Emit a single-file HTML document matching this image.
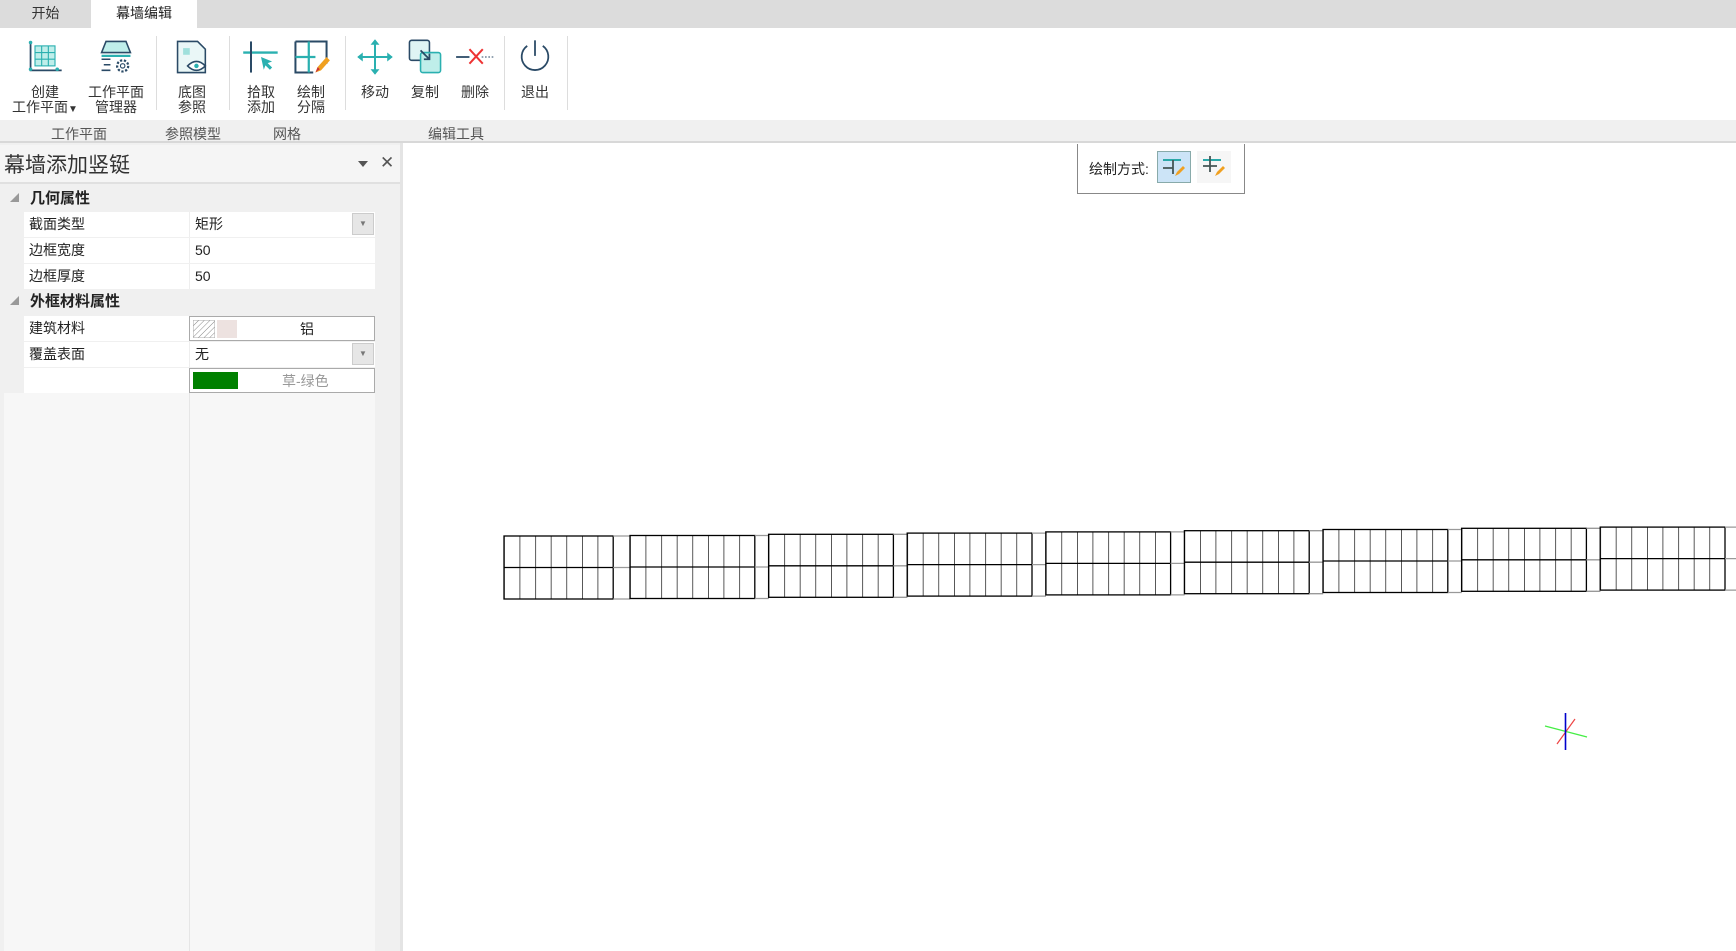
<!DOCTYPE html>
<html><head><meta charset="utf-8"><style>
*{margin:0;padding:0;box-sizing:border-box}
body{width:1736px;height:951px;overflow:hidden;background:#fff;font-family:"Liberation Sans","Noto Sans CJK SC",sans-serif;color:#222;position:relative}
.abs{position:absolute}
.tabbar{left:0;top:0;width:1736px;height:28px;background:#dcdcdc}
.tab{top:0;height:28px;line-height:27px;font-size:14px;text-align:center}
.ribbon{left:0;top:28px;width:1736px;height:92px;background:#fff}
.glabels{left:0;top:120px;width:1736px;height:23px;background:#f0f0f0;border-bottom:2px solid #d8d8d8}
.gl{top:124px;font-size:14px;color:#555;transform:translateX(-50%)}
.btn{top:37px;width:70px;margin-left:-35px;text-align:center;font-size:14px;line-height:15px;color:#333;white-space:nowrap}
.btn svg{display:block;margin:0 auto 8px}
.sep{top:36px;width:1px;height:74px;background:#ddd}
.panel{left:0;top:143px;width:400px;height:808px;background:#f0f0f0}
.split{left:400px;top:143px;width:3px;height:808px;background:#e4e4e4}
.row{left:24px;width:351px;height:25px;background:#fff;font-size:14px;line-height:24px}
.row .n{position:absolute;left:5px;top:0}
.row .v{position:absolute;left:165px;top:0;width:186px;height:25px;border-left:1px solid #eee;padding-left:5px}
.grp{left:0;width:375px;height:26px;font-size:15px;font-weight:bold;line-height:25px}
.dd{position:absolute;right:1px;top:1px;width:22px;height:22px;background:#e6e6e6;border:1px solid #ccc;font-size:8px;text-align:center;line-height:20px;color:#777}
</style></head><body>
<div class="abs tabbar"></div>
<div class="abs tab" style="left:0;width:91px;color:#333">开始</div>
<div class="abs tab" style="left:91px;width:106px;background:#fff">幕墙编辑</div>
<div class="abs ribbon"></div>

<div class="abs btn" style="left:45px"><svg width="40" height="40" viewBox="0 0 36 36"><rect x="9" y="8" width="18" height="18" fill="#bfeeea" stroke="#2ab0b0"/><path d="M9 14h18M9 20h18M15 8v18M21 8v18" stroke="#2ab0b0"/><path d="M5 4v26h28" stroke="#2a4a66" stroke-width="1.6" fill="none"/><circle cx="5" cy="5" r="1.6" fill="#2ab0b0"/><circle cx="5" cy="29" r="1.6" fill="#2ab0b0"/><circle cx="29" cy="29" r="1.6" fill="#2ab0b0"/></svg>创建<br>工作平面<span style="font-size:10px">▼</span></div>
<div class="abs btn" style="left:116px"><svg width="40" height="40" viewBox="0 0 36 36"><path d="M9 4h18l4 10H5z" fill="#bfeeea" stroke="#2a4a66" stroke-width="1.4"/><path d="M5 17h26" stroke="#2ab0b0" stroke-width="2"/><path d="M5 20h8M7 25h6M5 30h8" stroke="#2a4a66" stroke-width="1.4"/><circle cx="24" cy="26" r="5" fill="none" stroke="#2a4a66" stroke-width="2" stroke-dasharray="2 1.5"/><circle cx="24" cy="26" r="2" fill="none" stroke="#2a4a66"/></svg>工作平面<br>管理器</div>
<div class="abs sep" style="left:156px"></div>
<div class="abs btn" style="left:192px"><svg width="40" height="40" viewBox="0 0 36 36"><path d="M5 4h18l7 7v21H5z" fill="#eaf7f7" stroke="#2a4a66" stroke-width="1.4"/><rect x="10" y="10" width="6" height="6" fill="#9fe0dc"/><path d="M14 26q8-8 16 0q-8 8-16 0z" fill="#fff" stroke="#2a4a66" stroke-width="1.4"/><circle cx="22" cy="26" r="2" fill="#2ab0b0"/></svg>底图<br>参照</div>
<div class="abs sep" style="left:229px"></div>
<div class="abs btn" style="left:261px"><svg width="40" height="40" viewBox="0 0 36 36"><path d="M2 14h31" stroke="#2ab0b0" stroke-width="2.2"/><path d="M9 4v28" stroke="#2a4a66" stroke-width="1.8"/><path d="M18 18l10 4-4 1.5 4 4-2 2-4-4-1.5 4z" fill="#2ab0b0"/></svg>拾取<br>添加</div>
<div class="abs btn" style="left:311px"><svg width="40" height="40" viewBox="0 0 36 36"><path d="M4 4h28v20M4 4v28h16" stroke="#2a4a66" stroke-width="1.8" fill="none"/><path d="M16 4v28M4 18h18" stroke="#2ab0b0" stroke-width="2"/><path d="M22 32l2-5 8-9 3 3-8 9z" fill="#f0a020"/><path d="M22 32l2-5 2 2z" fill="#c33"/></svg>绘制<br>分隔</div>
<div class="abs sep" style="left:345px"></div>
<div class="abs btn" style="left:375px"><svg width="40" height="40" viewBox="0 0 36 36"><path d="M18 3v30M3 18h30" stroke="#2ab0b0" stroke-width="1.8"/><path d="M18 2l-4 5h8zM18 34l-4-5h8zM2 18l5-4v8zM34 18l-5-4v8z" fill="#2ab0b0"/></svg>移动</div>
<div class="abs btn" style="left:425px"><svg width="40" height="40" viewBox="0 0 36 36"><rect x="4" y="3" width="18" height="18" rx="2" fill="#dff4f4" stroke="#2a4a66" stroke-width="1.4"/><rect x="14" y="14" width="18" height="18" rx="2" fill="#bfeeea" stroke="#2ab0b0" stroke-width="1.4"/><path d="M14 12l8 8M22 15v5h-5" stroke="#2a4a66" stroke-width="1.6" fill="none"/></svg>复制</div>
<div class="abs btn" style="left:475px"><svg width="40" height="40" viewBox="0 0 36 36"><path d="M1 18h12" stroke="#2a4a66" stroke-width="1.6"/><path d="M24 18h11" stroke="#2a4a66" stroke-dasharray="1.5 1.5"/><path d="M13 11l12 13M25 11L13 24" stroke="#e33" stroke-width="1.8"/></svg>删除</div>
<div class="abs sep" style="left:504px"></div>
<div class="abs btn" style="left:535px"><svg width="40" height="40" viewBox="0 0 36 36"><path d="M11 8a12 12 0 1 0 14 0" stroke="#2a4a66" stroke-width="1.6" fill="none"/><path d="M18 3v14" stroke="#2a4a66" stroke-width="1.6"/></svg>退出</div>
<div class="abs sep" style="left:567px"></div>

<div class="abs glabels"></div>
<div class="abs gl" style="left:79px">工作平面</div>
<div class="abs gl" style="left:193px">参照模型</div>
<div class="abs gl" style="left:287px">网格</div>
<div class="abs gl" style="left:456px">编辑工具</div>

<div class="abs panel"></div>
<div class="abs" style="left:0;top:145px;width:400px;height:39px;background:#f5f5f5;border-bottom:2px solid #e0e0e0"></div>
<div class="abs" style="left:4px;top:149px;font-size:21px;color:#333">幕墙添加竖铤</div>
<div class="abs" style="left:358px;top:161px;width:0;height:0;border-left:5px solid transparent;border-right:5px solid transparent;border-top:6px solid #555"></div>
<div class="abs" style="left:380px;top:153px;font-size:17px;color:#555">✕</div>
<div class="abs" style="left:4px;top:393px;width:371px;height:558px;background:#f7f7f7"></div>
<div class="abs" style="left:189px;top:393px;width:1px;height:558px;background:#e6e6e6"></div>

<div class="abs grp" style="top:186px"><span style="position:absolute;left:10px;font-size:9px;color:#999">◢</span><span style="position:absolute;left:30px">几何属性</span></div>
<div class="abs row" style="top:212px"><span class="n">截面类型</span><span class="v">矩形<span class="dd">▼</span></span></div>
<div class="abs row" style="top:238px"><span class="n">边框宽度</span><span class="v">50</span></div>
<div class="abs row" style="top:264px"><span class="n">边框厚度</span><span class="v">50</span></div>
<div class="abs grp" style="top:289px"><span style="position:absolute;left:10px;font-size:9px;color:#999">◢</span><span style="position:absolute;left:30px">外框材料属性</span></div>
<div class="abs row" style="top:316px"><span class="n">建筑材料</span><span class="v" style="border:1px solid #aaa;padding:0"><svg style="position:absolute;left:3px;top:3px" width="22" height="18"><defs><pattern id="h" width="4" height="4" patternUnits="userSpaceOnUse" patternTransform="rotate(45)"><path d="M0 0v4" stroke="#888"/></pattern></defs><rect width="22" height="18" fill="url(#h)" stroke="#aaa"/></svg><span style="position:absolute;left:27px;top:3px;width:20px;height:18px;background:#ede2e0"></span><span style="position:absolute;left:110px">铝</span></span></div>
<div class="abs row" style="top:342px"><span class="n">覆盖表面</span><span class="v">无<span class="dd">▼</span></span></div>
<div class="abs row" style="top:368px"><span class="v" style="border:1px solid #aaa;padding:0"><span style="position:absolute;left:3px;top:3px;width:45px;height:17px;background:#008000"></span><span style="position:absolute;left:92px;color:#999">草-绿色</span></span></div>

<div class="abs split"></div>

<div class="abs" style="left:1077px;top:144px;width:168px;height:50px;border:1px solid #888;border-top:none;background:#fff"></div>
<div class="abs" style="left:1089px;top:159px;font-size:14px">绘制方式:</div>
<div class="abs" style="left:1157px;top:151px;width:34px;height:32px;background:#cce4f7;border:1px solid #8aa"></div>
<div class="abs" style="left:1197px;top:151px;width:34px;height:32px;background:#f6f6f6"></div>
<svg class="abs" style="left:1160px;top:154px" width="30" height="26"><path d="M3 6h18" stroke="#2aa8a8" stroke-width="2"/><path d="M13 6v14M3 14h10" stroke="#455" stroke-width="1.8"/><path d="M15 22l2-4 6-6 2 2-6 6z" fill="#f0a020"/></svg>
<svg class="abs" style="left:1200px;top:154px" width="30" height="26"><path d="M3 6h18" stroke="#2aa8a8" stroke-width="2"/><path d="M10 2v16M3 12h14" stroke="#455" stroke-width="1.8"/><path d="M15 22l2-4 6-6 2 2-6 6z" fill="#f0a020"/></svg>

<svg class="abs" style="left:0;top:0" width="1736" height="951">
<defs><pattern id="v" width="15.6" height="100" patternUnits="userSpaceOnUse"><path d="M0 0v100" stroke="#000" stroke-width="1.3"/></pattern></defs>
<g fill="none" stroke="#000" stroke-width="1.3">
<g transform="translate(504,536)"><rect width="109.2" height="63" fill="url(#v)"/><path d="M0 31.5h109.2"/><path d="M109.2 0h17M109.2 31.5h17M109.2 63h17" stroke="#999"/></g>
<g transform="translate(630,535.5)"><rect width="124.8" height="63" fill="url(#v)"/><path d="M0 31.5h124.8"/><path d="M124.8 0h14M124.8 31.5h14M124.8 63h14" stroke="#999"/></g>
<g transform="translate(768.6,534.3)"><rect width="124.8" height="63" fill="url(#v)"/><path d="M0 31.5h124.8"/><path d="M124.8 0h14M124.8 31.5h14M124.8 63h14" stroke="#999"/></g>
<g transform="translate(907.2,533.1)"><rect width="124.8" height="63" fill="url(#v)"/><path d="M0 31.5h124.8"/><path d="M124.8 0h14M124.8 31.5h14M124.8 63h14" stroke="#999"/></g>
<g transform="translate(1045.8,531.9)"><rect width="124.8" height="63" fill="url(#v)"/><path d="M0 31.5h124.8"/><path d="M124.8 0h14M124.8 31.5h14M124.8 63h14" stroke="#999"/></g>
<g transform="translate(1184.4,530.7)"><rect width="124.8" height="63" fill="url(#v)"/><path d="M0 31.5h124.8"/><path d="M124.8 0h14M124.8 31.5h14M124.8 63h14" stroke="#999"/></g>
<g transform="translate(1323,529.5)"><rect width="124.8" height="63" fill="url(#v)"/><path d="M0 31.5h124.8"/><path d="M124.8 0h14M124.8 31.5h14M124.8 63h14" stroke="#999"/></g>
<g transform="translate(1461.6,528.3)"><rect width="124.8" height="63" fill="url(#v)"/><path d="M0 31.5h124.8"/><path d="M124.8 0h14M124.8 31.5h14M124.8 63h14" stroke="#999"/></g>
<g transform="translate(1600.2,527.1)"><rect width="124.8" height="63" fill="url(#v)"/><path d="M0 31.5h124.8"/><path d="M124.8 0h14M124.8 31.5h14M124.8 63h14" stroke="#999"/></g>
</g>
<path d="M1545 726L1587 737" stroke="#4e4" stroke-width="1.2"/>
<path d="M1557 744L1575 719" stroke="#e44" stroke-width="1.2"/>
<path d="M1565.5 713v37" stroke="#00c" stroke-width="1.6"/>
</svg>
</body></html>
